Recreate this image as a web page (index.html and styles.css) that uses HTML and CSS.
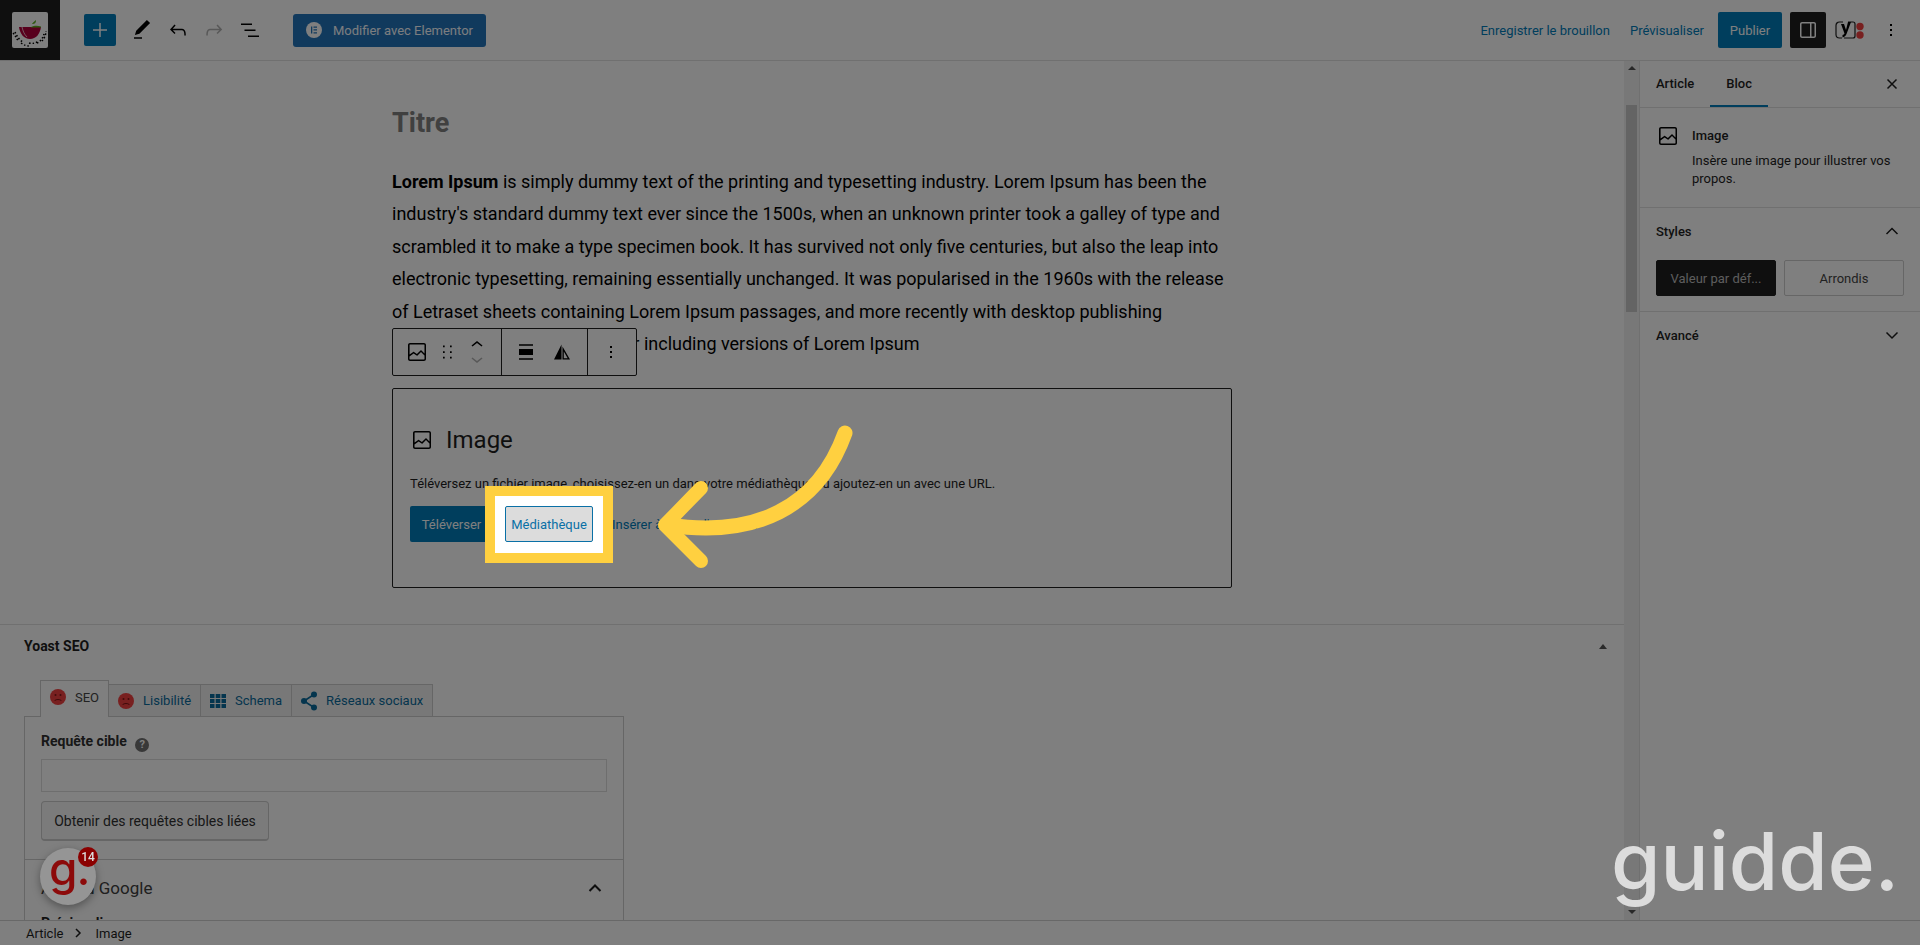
FILE: index.html
```html
<!DOCTYPE html>
<html lang="fr">
<head>
    <meta charset="UTF-8">
    <title>Modifier l'article</title>
    <link rel="stylesheet" href="styles.css">
</head>
<body>
    <div class="editor">
        <header class="topbar">
            <div class="site-icon">
                <svg width="36" height="36" viewBox="0 0 36 36">
                    <rect width="36" height="36" rx="2" fill="#fff"/>
                    <path d="M1 21c3 3 3 6 6 8M3 20c2 4 4 8 8 10M9 31c3 2 5 3 8 3M17 31c4 1 7 0 10-2M25 31c3-1 6-5 7-9M30 29c2-2 4-6 4-10" fill="none" stroke="#000" stroke-width="1.500" stroke-dasharray="1.500 2"/>
                    <path d="M7 15h22c-1 7-5 12-11 12-6 0-10-5-11-12z" fill="#b0003a"/>
                    <path d="M10 15c1 4 2 7 5 10" fill="none" stroke="#fff" stroke-width="1" opacity=".7"/>
                    <path d="M20 12c1-2 3-3 4-4 0 3-1 4-4 4z" fill="#5cb01e"/>
                    <path d="M19 15c3-1.500 7-1.500 10-.5v1h-10z" fill="#5cb01e"/>
                </svg>
            </div>
            <div class="tools">
                <button class="add-btn">
                    <svg width="24" height="24" viewBox="0 0 24 24"><path d="M12 5v14M5 12h14" stroke="#fff" stroke-width="1.500" fill="none"/></svg>
                </button>
                <span class="tool">
                    <svg width="24" height="24" viewBox="0 0 24 24"><path d="M20.100 5.100 16.900 2 6.200 12.700l-1.300 4.400 4.500-1.300L20.100 5.100zM4 20.800h8v-1.500H4v1.500z"/></svg>
                </span>
                <span class="tool">
                    <svg width="24" height="24" viewBox="0 0 24 24"><path d="M18.300 11.700c-.6-.6-1.400-.9-2.300-.9H6.700l2.900-3.300-1.100-1-4.500 5L8.500 16l1-1-2.700-2.700H16c.5 0 .9.200 1.300.5 1 1 1 3.400 1 4.500v.3h1.500v-.2c0-1.500 0-4.300-1.500-5.700z"/></svg>
                </span>
                <span class="tool tool-off">
                    <svg width="24" height="24" viewBox="0 0 24 24"><path d="M15.600 6.500l-1.100 1 2.900 3.300H8c-.9 0-1.700.3-2.300.9-1.400 1.500-1.400 4.200-1.400 5.600v.2h1.500v-.3c0-1.100 0-3.500 1-4.500.3-.3.7-.5 1.300-.5h9.200L14.500 15l1.100 1.100 4.600-4.600-4.600-5z"/></svg>
                </span>
                <span class="tool">
                    <svg width="24" height="24" viewBox="0 0 24 24"><path d="M3 5.500h11V7H3zM6.500 11.500h11V13h-11zM10 17.500h11V19H10z"/></svg>
                </span>
                <button class="elementor-btn">
                    <svg width="16" height="16" viewBox="0 0 16 16"><circle cx="8" cy="8" r="8" fill="#fff"/><path d="M5 4.500h1.300v7H5zM7.500 4.500H11v1.300H7.500zM7.500 7.300H11v1.300H7.500zM7.500 10.200H11v1.300H7.500z" fill="#2275bb"/></svg>
                    Modifier avec Elementor
                </button>
            </div>
            <div class="actions">
                <a class="link-btn">Enregistrer le brouillon</a>
                <a class="link-btn">Prévisualiser</a>
                <button class="publish-btn">Publier</button>
                <button class="panel-btn">
                    <svg width="24" height="24" viewBox="0 0 24 24"><path d="M18 4H6c-1.100 0-2 .9-2 2v12c0 1.100.9 2 2 2h12c1.100 0 2-.9 2-2V6c0-1.100-.9-2-2-2zM5.500 18V6c0-.3.200-.5.500-.5h8v13H6c-.3 0-.5-.2-.5-.5zm13 0c0 .3-.2.500-.5.500h-2.500v-13H18c.3 0 .5.200.5.500v12z" fill="#fff"/></svg>
                </button>
                <span class="yoast-icon">
                    <svg width="30" height="24" viewBox="0 0 30 24">
                        <path d="M8 4H4.500C2.500 4 1 5.500 1 7.500v9C1 18.500 2.500 20 4.500 20H7M13 4h5c1 0 2 1 2 2v12c0 1-1 2-2 2H9" fill="none" stroke="#1e1e1e" stroke-width="1.200"/>
                        <path d="M6 6h3l2 6 2-8h3l-4.500 12c-.7 2-2 3-4 3.500v-2.500c1-.3 1.600-.8 2-1.500L6 6z" fill="#000"/>
                        <circle cx="25" cy="8.500" r="3.700" fill="#f04040"/>
                        <circle cx="25" cy="17" r="3.700" fill="#f04040"/>
                    </svg>
                </span>
                <span class="more-btn">
                    <svg width="24" height="24" viewBox="0 0 24 24"><path d="M11 6h2v2h-2zM11 11h2v2h-2zM11 16h2v2h-2z"/></svg>
                </span>
            </div>
        </header>

        <div class="workspace">
            <main class="content">
                <div class="canvas">
                    <div class="post">
                        <h1 class="post-title">Titre</h1>
                        <p class="post-text"><strong>Lorem Ipsum</strong> is simply dummy text of the printing and typesetting industry. Lorem Ipsum has been the industry's standard dummy text ever since the 1500s, when an unknown printer took a galley of type and scrambled it to make a type specimen book. It has survived not only five centuries, but also the leap into electronic typesetting, remaining essentially unchanged. It was popularised in the 1960s with the release of Letraset sheets containing Lorem Ipsum passages, and more recently with desktop publishing software like Aldus PageMaker including versions of Lorem Ipsum</p>

                        <div class="block-toolbar">
                            <div class="toolbar-group">
                                <svg width="24" height="24" viewBox="0 0 24 24"><path d="M19 3H5c-1.100 0-2 .9-2 2v14c0 1.100.9 2 2 2h14c1.100 0 2-.9 2-2V5c0-1.100-.9-2-2-2zM5 4.500h14c.3 0 .5.200.5.500v8.400l-3-2.900c-.3-.3-.8-.3-1 0L11.900 14 9 12c-.3-.2-.6-.2-.8 0l-3.600 2.600V5c-.1-.3.100-.5.400-.5zm14 15H5c-.3 0-.5-.2-.5-.5v-2.400l4.100-3 3 1.900c.3.200.7.200.9-.1L16 12l3.500 3.400V19c0 .3-.2.500-.5.500z"/></svg>
                                <svg class="drag" width="24" height="24" viewBox="0 0 24 24"><path d="M8 5.500h1.700v1.700H8zM15 5.500h1.700v1.700H15zM8 11.200h1.700v1.700H8zM15 11.200h1.700v1.700H15zM8 16.800h1.700v1.700H8zM15 16.800h1.700v1.700H15z"/></svg>
                                <span class="mover">
                                    <svg width="24" height="16" viewBox="0 0 24 16"><path d="M6.500 9.400 12 5l5.500 4.400-.9 1.200L12 7l-4.500 3.600-1-1.200z"/></svg>
                                    <svg class="mover-off" width="24" height="16" viewBox="0 0 24 16"><path d="M17.500 6.600 12 11 6.500 6.600l.9-1.200L12 9l4.500-3.600 1 1.200z"/></svg>
                                </span>
                            </div>
                            <div class="toolbar-group">
                                <svg width="24" height="24" viewBox="0 0 24 24"><path d="M5 15h14V9H5v6zm0 4.800h14v-1.500H5v1.500zM5 4.200v1.500h14V4.200H5z"/></svg>
                                <svg width="24" height="24" viewBox="0 0 24 24"><path fill-rule="evenodd" d="M11.500 4.500 4 19.500h7.500v-15zM12.500 6.500v13H20l-7.500-13zm1.300 5v6.700h3.900l-3.900-6.700z"/></svg>
                            </div>
                            <div class="toolbar-group">
                                <svg width="24" height="24" viewBox="0 0 24 24"><path d="M11 6h2v2h-2zM11 11h2v2h-2zM11 16h2v2h-2z"/></svg>
                            </div>
                        </div>

                        <section class="placeholder">
                            <div class="placeholder-label">
                                <svg width="24" height="24" viewBox="0 0 24 24"><path d="M19 3H5c-1.100 0-2 .9-2 2v14c0 1.100.9 2 2 2h14c1.100 0 2-.9 2-2V5c0-1.100-.9-2-2-2zM5 4.500h14c.3 0 .5.200.5.500v8.400l-3-2.900c-.3-.3-.8-.3-1 0L11.900 14 9 12c-.3-.2-.6-.2-.8 0l-3.600 2.600V5c-.1-.3.100-.5.400-.5zm14 15H5c-.3 0-.5-.2-.5-.5v-2.400l4.100-3 3 1.900c.3.200.7.200.9-.1L16 12l3.500 3.400V19c0 .3-.2.500-.5.500z"/></svg>
                                Image
                            </div>
                            <p class="placeholder-help">Téléversez un fichier image, choisissez-en un dans votre médiathèque ou ajoutez-en un avec une URL.</p>
                            <div class="placeholder-actions">
                                <button class="upload-btn">Téléverser</button>
                                <button class="library-btn">Médiathèque</button>
                                <a class="url-link">Insérer à partir d'une URL</a>
                            </div>
                        </section>
                    </div>
                </div>

                <section class="metabox">
                    <h2 class="metabox-title">Yoast SEO <span class="caret-up"></span></h2>
                    <div class="seo-tabs">
                        <span class="seo-tab seo-tab-active">
                            <svg width="16" height="16" viewBox="0 0 16 16"><use href="#sad-face"/></svg>SEO
                        </span>
                        <span class="seo-tab">
                            <svg width="16" height="16" viewBox="0 0 16 16"><use href="#sad-face"/></svg>Lisibilité
                        </span>
                        <span class="seo-tab">
                            <svg width="16" height="16" viewBox="0 0 16 16"><path d="M0 1h4.500v4H0zM5.700 1h4.600v4H5.700zM11.500 1H16v4h-4.500zM0 6h4.500v4H0zM5.700 6h4.600v4H5.700zM11.500 6H16v4h-4.500zM0 11h4.500v4H0zM5.700 11h4.600v4H5.700zM11.500 11H16v4h-4.500z" fill="#0a6b9c"/></svg>Schema
                        </span>
                        <span class="seo-tab">
                            <svg width="16" height="20" viewBox="0 0 16 20"><g fill="#0a6b9c"><circle cx="3" cy="10" r="3"/><circle cx="13" cy="3.500" r="3"/><circle cx="13" cy="16.500" r="3"/></g><path d="M3 10 13 3.500M3 10l10 6.500" stroke="#0a6b9c" stroke-width="1.500"/></svg>Réseaux sociaux
                        </span>
                    </div>
                    <div class="seo-panel">
                        <div class="seo-form">
                            <label class="seo-label">Requête cible <span class="help-dot">?</span></label>
                            <div class="seo-input"></div>
                            <button class="seo-btn">Obtenir des requêtes cibles liées</button>
                        </div>
                        <div class="seo-preview">
                            <h3>Aperçu Google</h3>
                            <svg width="24" height="24" viewBox="0 0 24 24"><path d="M6.500 15 12 9.500l5.500 5.500" fill="none" stroke="#1e1e1e" stroke-width="2"/></svg>
                        </div>
                        <p class="seo-preview-label">Prévisualiser sur :</p>
                    </div>
                </section>

                <div class="gbadge">
                    <span class="gbadge-letter">g.</span>
                    <span class="gbadge-count">14</span>
                </div>
            </main>

            <div class="scrollbar">
                <span class="scroll-arrow scroll-arrow-up"></span>
                <span class="scroll-thumb"></span>
                <span class="scroll-arrow scroll-arrow-down"></span>
            </div>

            <aside class="sidebar">
                <div class="side-tabs">
                    <span class="side-tab">Article</span>
                    <span class="side-tab side-tab-active">Bloc</span>
                    <svg class="side-close" width="24" height="24" viewBox="0 0 24 24"><path d="M7.500 7.500l9 9M16.500 7.500l-9 9" stroke="#1e1e1e" stroke-width="1.500"/></svg>
                </div>
                <div class="block-card">
                    <svg width="24" height="24" viewBox="0 0 24 24"><path d="M19 3H5c-1.100 0-2 .9-2 2v14c0 1.100.9 2 2 2h14c1.100 0 2-.9 2-2V5c0-1.100-.9-2-2-2zM5 4.500h14c.3 0 .5.200.5.500v8.400l-3-2.900c-.3-.3-.8-.3-1 0L11.900 14 9 12c-.3-.2-.6-.2-.8 0l-3.600 2.600V5c-.1-.3.100-.5.400-.5zm14 15H5c-.3 0-.5-.2-.5-.5v-2.400l4.100-3 3 1.900c.3.200.7.200.9-.1L16 12l3.500 3.400V19c0 .3-.2.500-.5.500z"/></svg>
                    <div>
                        <h2>Image</h2>
                        <p>Insère une image pour illustrer vos propos.</p>
                    </div>
                </div>
                <div class="side-panel">
                    <div class="side-panel-head">
                        Styles
                        <svg width="24" height="24" viewBox="0 0 24 24"><path d="M6.500 15 12 9.500l5.500 5.500" fill="none" stroke="#1e1e1e" stroke-width="1.500"/></svg>
                    </div>
                    <div class="style-picker">
                        <span class="style-opt style-opt-on">Valeur par déf...</span>
                        <span class="style-opt">Arrondis</span>
                    </div>
                </div>
                <div class="side-panel side-panel-closed">
                    <div class="side-panel-head">
                        Avancé
                        <svg width="24" height="24" viewBox="0 0 24 24"><path d="M6.500 9.500 12 15l5.500-5.500" fill="none" stroke="#1e1e1e" stroke-width="1.500"/></svg>
                    </div>
                </div>
            </aside>
        </div>

        <footer class="crumbs">
            <span>Article</span>
            <svg width="16" height="16" viewBox="0 0 16 16"><path d="M6 4l4 4-4 4" fill="none" stroke="#1e1e1e" stroke-width="1.500"/></svg>
            <span>Image</span>
        </footer>
    </div>

    <!-- dark layer over the whole editor, the callout sits on top of it -->
    <div class="dim"></div>

    <div class="callout">
        <div class="callout-frame"></div>
    </div>

    <svg class="callout-arrow" width="240" height="170" viewBox="0 0 240 170">
        <path d="M205 13C178 88 115 118 28 105" fill="none" stroke="#ffd040" stroke-width="15" stroke-linecap="round"/>
        <path d="M61 68 25 105 61 141" fill="none" stroke="#ffd040" stroke-width="14" stroke-linecap="round" stroke-linejoin="round"/>
    </svg>

    <div class="brand">guidde.</div>

    <svg width="0" height="0" class="defs">
        <symbol id="sad-face" viewBox="0 0 16 16">
            <circle cx="8" cy="8" r="8" fill="#f04040"/>
            <circle cx="5.500" cy="6" r="1" fill="#801818"/>
            <circle cx="10.500" cy="6" r="1" fill="#801818"/>
            <path d="M4.500 12c1-2 6-2 7 0" fill="none" stroke="#801818" stroke-width="1"/>
        </symbol>
    </svg>
</body>
</html>
```

FILE: styles.css
```css
* {
    box-sizing: border-box;
}

html, body {
    height: 100%;
}

body {
    margin: 0;
    font-family: Roboto, sans-serif;
    font-size: 13px;
    color: #1e1e1e;
    background: #fff;
    overflow: hidden;
}

button {
    font-family: inherit;
    border: none;
    cursor: pointer;
}

svg {
    display: block;
    flex: none;
}

.editor {
    height: 945px;
    display: flex;
    flex-direction: column;
}

/* top bar */
.topbar {
    height: 61px;
    flex: none;
    display: flex;
    align-items: center;
    border-bottom: 1px solid #e0e0e0;
    background: #fff;
}

.site-icon {
    width: 60px;
    height: 60px;
    background: #1e1e1e;
    display: flex;
    align-items: center;
    justify-content: center;
}

.tools {
    display: flex;
    align-items: center;
    padding-left: 24px;
}

.add-btn {
    width: 32px;
    height: 32px;
    padding: 4px;
    background: #007cba;
    border-radius: 2px;
}

.tool {
    width: 36px;
    display: flex;
    justify-content: center;
}

.tools .tool:nth-child(2) {
    margin-left: 8px;
}

.tool-off {
    opacity: .3;
}

.elementor-btn {
    margin-left: 25px;
    width: 193px;
    height: 33px;
    display: flex;
    align-items: center;
    gap: 11px;
    padding: 0 0 0 13px;
    background: #2275bb;
    color: #f8fbff;
    font-size: 13px;
    border-radius: 3px;
}

.actions {
    margin-left: auto;
    display: flex;
    align-items: center;
}

.link-btn {
    color: #007cba;
    font-size: 13px;
    margin-left: 20px;
}

.publish-btn {
    margin-left: 14px;
    width: 64px;
    height: 36px;
    background: #007cba;
    color: #fff;
    font-size: 13px;
    border-radius: 2px;
}

.panel-btn {
    margin-left: 8px;
    width: 36px;
    height: 36px;
    padding: 6px;
    background: #1e1e1e;
    border-radius: 2px;
}

.yoast-icon {
    margin-left: 9px;
}

.more-btn {
    margin-left: 14px;
    margin-right: 17px;
}

/* main layout */
.workspace {
    flex: 1;
    min-height: 0;
    display: flex;
}

.content {
    position: relative;
    width: 1624px;
    flex: none;
    overflow: hidden;
}

.canvas {
    height: 563px;
    padding-top: 41px;
}

.post {
    width: 840px;
    margin-left: 392px;
    position: relative;
}

.post-title {
    margin: 0;
    font-size: 27px;
    line-height: 42px;
    font-weight: 700;
    color: #808080;
}

.post-text {
    margin: 22px 0 0;
    font-size: 18px;
    line-height: 32.4px;
    color: #000;
}

.post-text strong {
    font-weight: 700;
}

.block-toolbar {
    position: absolute;
    left: 0;
    top: 226px;
    height: 48px;
    display: flex;
    background: #fff;
    border: 1px solid #1e1e1e;
    border-radius: 2px;
}

.toolbar-group {
    display: flex;
    align-items: center;
    border-right: 1px solid #1e1e1e;
}

.toolbar-group:first-child {
    width: 109px;
    padding-left: 12px;
}

.toolbar-group:nth-child(2) {
    width: 86px;
    padding-left: 12px;
    gap: 12px;
}

.toolbar-group:last-child {
    width: 48px;
    border-right: none;
    padding-left: 11px;
}

.drag {
    margin-left: 6px;
}

.mover {
    margin-left: 6px;
}

.mover-off {
    opacity: .3;
}

.placeholder {
    position: absolute;
    left: 0;
    top: 286px;
    width: 840px;
    height: 200px;
    padding: 31px 17px 0;
    border: 1px solid #1e1e1e;
    border-radius: 2px;
    background: #fff;
}

.placeholder-label {
    display: flex;
    align-items: center;
    gap: 12px;
    font-size: 24px;
    line-height: 40px;
}

.placeholder-help {
    margin: 15px 0 0;
    font-size: 13px;
    line-height: 18px;
}

.placeholder-actions {
    display: flex;
    align-items: center;
    margin-top: 13px;
}

.upload-btn {
    width: 83px;
    height: 36px;
    background: #007cba;
    color: #fff;
    font-size: 13px;
    border-radius: 2px;
}

/* lifted over the dark layer, inside the callout frame */
.library-btn {
    position: relative;
    z-index: 7;
    width: 88px;
    height: 36px;
    margin-left: 12px;
    padding: 0;
    background: #dcdcdc;
    color: #0a70a6;
    font-size: 13px;
    border: 1px solid #0a70a6;
    border-radius: 2px;
}

.url-link {
    margin-left: 19px;
    color: #007cba;
    font-size: 13px;
}

/* yoast box */
.metabox {
    height: 300px;
    padding: 0 24px;
    border-top: 1px solid #e0e0e0;
}

.metabox-title {
    position: relative;
    margin: 0;
    height: 44px;
    font-size: 14px;
    font-weight: 700;
    line-height: 42px;
}

.caret-up {
    position: absolute;
    left: 1575px;
    top: 19px;
    border: 4px solid transparent;
    border-top: none;
    border-bottom: 5px solid #555;
}

.seo-tabs {
    display: flex;
    align-items: flex-end;
    height: 36px;
    margin-top: 11px;
    margin-left: 16px;
    color: #0a6b9c;
    font-size: 13px;
}

.seo-tab {
    height: 32px;
    display: flex;
    align-items: center;
    gap: 9px;
    padding: 0 9px;
    border: 1px solid #ccc;
    border-bottom: none;
    border-left: none;
    background: #f1f1f1;
}

.seo-tab-active {
    height: 37px;
    margin-bottom: -1px;
    padding: 0 9px 4px;
    color: #444;
    background: #fff;
    border-left: 1px solid #ccc;
    position: relative;
    z-index: 1;
}

.seo-panel {
    width: 600px;
    height: 300px;
    border: 1px solid #ccc;
}

.seo-form {
    padding: 15px 16px 0;
    height: 143px;
    border-bottom: 1px solid #ccc;
}

.seo-label {
    display: block;
    font-size: 14px;
    font-weight: 700;
    color: #303030;
    line-height: 18px;
}

.help-dot {
    display: inline-block;
    width: 14px;
    height: 14px;
    margin-left: 5px;
    border-radius: 50%;
    background: #707070;
    color: #fff;
    font-size: 11px;
    line-height: 14px;
    text-align: center;
    vertical-align: -2px;
}

.seo-input {
    width: 566px;
    height: 33px;
    margin-top: 7px;
    border: 1px solid #ddd;
    background: #fff;
}

.seo-btn {
    display: block;
    width: 228px;
    height: 40px;
    margin-top: 9px;
    padding: 0;
    background: #f7f7f7;
    color: #303030;
    font-size: 14px;
    border: 1px solid #ccc;
    border-bottom-width: 2px;
    border-radius: 4px;
}

.seo-preview {
    display: flex;
    justify-content: space-between;
    align-items: center;
    padding: 0 16px;
    height: 56px;
}

.seo-preview h3 {
    margin: 0;
    font-size: 17px;
    font-weight: 400;
    color: #404040;
}

.seo-preview-label {
    margin: -2px 0 0;
    padding: 0 16px;
    font-size: 14px;
    line-height: 18px;
    font-weight: 700;
}

/* floating badge stays bright, above the dark layer */
.gbadge {
    position: absolute;
    left: 40px;
    top: 787px;
    z-index: 6;
    width: 56px;
    height: 57px;
    border-radius: 50%;
    background: #959595;
    box-shadow: 0 3px 8px rgba(0, 0, 0, .35);
}

.gbadge-letter {
    position: absolute;
    left: 9px;
    top: -3px;
    font-family: Inter, sans-serif;
    font-size: 46px;
    font-weight: 500;
    line-height: 46px;
    letter-spacing: -1px;
    color: #8c0a0a;
}

.gbadge-count {
    position: absolute;
    left: 38px;
    top: -1px;
    width: 20px;
    height: 20px;
    border-radius: 50%;
    background: #8b0000;
    color: #ddd;
    font-size: 12px;
    font-weight: 500;
    line-height: 20px;
    text-align: center;
}

/* scrollbar */
.scrollbar {
    position: relative;
    width: 15px;
    flex: none;
    background: #f1f1f1;
}

.scroll-arrow {
    position: absolute;
    left: 4px;
    border: 4px solid transparent;
}

.scroll-arrow-up {
    top: 5px;
    border-top: none;
    border-bottom: 4px solid #505050;
}

.scroll-arrow-down {
    bottom: 6px;
    border-bottom: none;
    border-top: 4px solid #505050;
}

.scroll-thumb {
    position: absolute;
    left: 2px;
    right: 2px;
    top: 44px;
    height: 207px;
    background: #c8c8c8;
}

/* right panel */
.sidebar {
    flex: 1;
    border-left: 1px solid #e0e0e0;
    background: #fff;
}

.side-tabs {
    height: 47px;
    display: flex;
    align-items: stretch;
    border-bottom: 1px solid #e0e0e0;
}

.side-tab {
    padding: 0 16px;
    line-height: 46px;
    font-weight: 500;
    font-size: 13px;
}

.side-tab-active {
    box-shadow: inset 0 -2px 0 #007cba;
}

.side-close {
    margin: 11px 16px 0 auto;
}

.block-card {
    display: flex;
    gap: 12px;
    padding: 16px;
    height: 100px;
    border-bottom: 1px solid #e0e0e0;
}

.block-card h2 {
    margin: 3px 0 0;
    font-size: 13px;
    line-height: 18px;
    font-weight: 500;
}

.block-card p {
    margin: 7px 0 0;
    font-size: 13px;
    line-height: 18px;
    color: #1e1e1e;
}

.side-panel {
    padding: 0 16px;
    height: 104px;
    border-bottom: 1px solid #e0e0e0;
}

.side-panel-closed {
    height: 50px;
    border-bottom: none;
}

.side-panel-head {
    display: flex;
    justify-content: space-between;
    align-items: center;
    height: 48px;
    padding-bottom: 2px;
    font-weight: 500;
    font-size: 13px;
}

.style-picker {
    display: flex;
    gap: 8px;
    margin-top: 4px;
}

.style-opt {
    width: 120px;
    height: 36px;
    line-height: 35px;
    text-align: center;
    border: 1px solid #ccc;
    border-radius: 2px;
    color: #444;
    font-size: 13px;
}

.style-opt-on {
    background: #1e1e1e;
    border-color: #1e1e1e;
    color: #bbb;
}

/* breadcrumb strip */
.crumbs {
    position: relative;
    height: 25px;
    flex: none;
    display: flex;
    align-items: center;
    padding-left: 26px;
    background: #fff;
    border-top: 1px solid #d0d0d0;
    z-index: 2;
}

.crumbs svg {
    margin: 0 9px 0 7px;
}

/* overlay and callout */
.dim {
    position: fixed;
    inset: 0;
    background: rgba(0, 0, 0, .5);
    z-index: 5;
}

.callout {
    position: fixed;
    left: 485px;
    top: 486px;
    width: 128px;
    height: 77px;
    padding: 10px;
    background: #ffd040;
    z-index: 6;
}

.callout-frame {
    height: 57px;
    background: #fff;
}

.callout-arrow {
    position: fixed;
    left: 640px;
    top: 420px;
    z-index: 6;
}

.brand {
    position: fixed;
    left: 1611px;
    top: 811px;
    font-family: Inter, sans-serif;
    font-size: 80px;
    font-weight: 500;
    line-height: 100px;
    color: #dcdcdc;
    z-index: 6;
}

.defs {
    position: absolute;
}
```
